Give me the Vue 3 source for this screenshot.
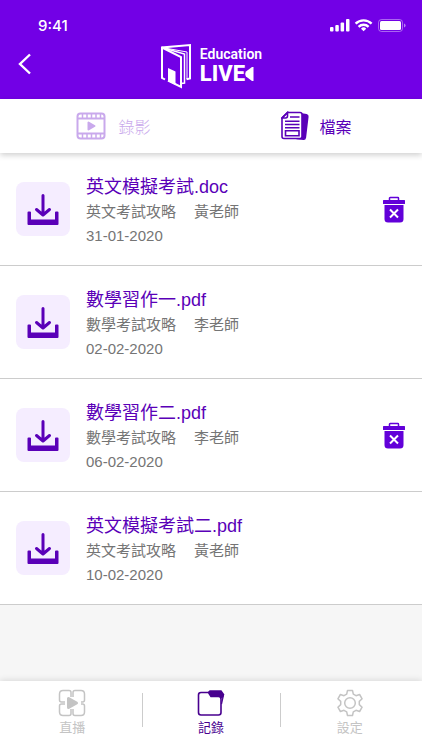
<template>
  <div class="files-view">
    <header class="app-header">
      <div class="status-bar">
        <span class="time">9:41</span>
        <svg class="status-icons" width="76" height="14" viewBox="0 0 76 14" fill="#fff">
          <rect x="0" y="8" width="3.500" height="4.500" rx="1" />
          <rect x="5.300" y="6" width="3.500" height="6.500" rx="1" />
          <rect x="10.600" y="3.500" width="3.500" height="9" rx="1" />
          <rect x="16" y="0" width="3.500" height="12.500" rx="1" />
          <g fill="none" stroke="#fff" stroke-width="2.400">
            <path d="M25.600 4.600a11.500 11.500 0 0 1 16 0" />
            <path d="M28.600 7.800a7.200 7.200 0 0 1 10 0" />
          </g>
          <path d="M31 9.700a3.600 3.600 0 0 1 5.200 0l-2.600 2.600z" />
          <rect x="48.500" y=".5" width="24" height="12" rx="3" fill="none" stroke="#fff" opacity=".4" />
          <rect x="50" y="2" width="21" height="9" rx="1.500" />
          <path d="M74 4.500v4q1.600-.6 1.600-2t-1.600-2z" opacity=".5" />
        </svg>
      </div>
      <div class="title-bar">
        <button class="back-btn" type="button" aria-label="返回">
          <svg width="14" height="22" viewBox="0 0 14 22" fill="none" stroke="#fff" stroke-width="2.400">
            <path d="M12 1.500 2 11l10 9.500" />
          </svg>
        </button>
        <div class="logo">
          <svg width="32" height="46" viewBox="0 0 32 46" fill="none" stroke="#fff" stroke-width="2">
            <path d="M5 36.500 2 34.800V4.500L30 2V35.500L26.500 36.300" />
            <path d="M2 4.500 21 14V44L8 37.500" />
            <path d="M2 4.500 24.500 11V40L21 40.500" stroke-width="1.500" />
            <path d="M2 4.500 27 9V36" stroke-width="1" />
            <path d="M8 25l7.500 3.500V42L8 38z" fill="#fff" stroke="none" />
          </svg>
          <div class="logo-text">
            <span class="logo-top">Education</span>
            <span class="logo-bottom">
              LIVE
              <svg width="9" height="14" viewBox="0 0 9 14" fill="#fff">
                <path d="M8.500 0v14H7L1 9.500Q-.5 7 1 4.500L7 0z" />
              </svg>
            </span>
          </div>
        </div>
      </div>
    </header>

    <div class="tabs">
      <button
        type="button"
        class="tab"
        :class="{ active: activeTab === 'video' }"
        @click="activeTab = 'video'"
      >
        <svg width="30" height="28" viewBox="0 0 30 28" fill="none" stroke="currentColor" stroke-width="2">
          <rect x="1.500" y="1.500" width="27" height="25" rx="3" />
          <path d="M2 6.500h26M2 21.500h26" />
          <path d="M6.500 2v4M11 2v4M15.500 2v4M20 2v4M24.500 2v4M6.500 22v4M11 22v4M15.500 22v4M20 22v4M24.500 22v4" stroke-width="1.500" />
          <path d="M12.500 10.500v7l6-3.500z" fill="currentColor" stroke-linejoin="round" />
        </svg>
        <span>錄影</span>
      </button>
      <button
        type="button"
        class="tab file-tab"
        :class="{ active: activeTab === 'file' }"
        @click="activeTab = 'file'"
      >
        <svg width="28" height="30" viewBox="0 0 28 30" fill="none" stroke="currentColor" stroke-width="1.600">
          <path d="M21 3l4.500.8q1.500.3 1.300 1.800l-2.500 21q-.3 1.900-1.800 1.700l-7-.8 4-1z" fill="currentColor" />
          <path d="M6.500 1.500H19q2 0 2 2V25.500q0 2-2 2H3q-2 0-2-2V7z" fill="#fff" />
          <path d="M6.500 1.500V5q0 2-2 2H1z" />
          <path d="M9 6h9.500M4 10.300h14.500M4 13.500h14.500M4 16.700h14.500" />
          <path d="M4.500 19.800h13.500v5h-13.500z" />
        </svg>
        <span>檔案</span>
      </button>
    </div>

    <ul class="file-list">
      <li v-for="file in files" :key="file.id" class="file-item">
        <button class="download-btn" type="button" :aria-label="'下載 ' + file.name">
          <svg width="32" height="32" viewBox="0 0 32 32" fill="none" stroke="#5a00b8">
            <path d="M16 2.500v19M9.500 16.500l6.500 5.500 6.500-5.500" stroke-width="3" stroke-linecap="round" stroke-linejoin="round" />
            <path d="M.5 19.500q0-1 1-1H3q1 0 1 1V26.500H28V19.500q0-1 1-1h1.500q1 0 1 1V31q0 1-1 1h-29q-1 0-1-1z" fill="#5a00b8" stroke="none" />
          </svg>
        </button>
        <div class="file-info">
          <h3>{{ file.name }}</h3>
          <p class="file-meta">
            <span>{{ file.course }}</span>
            <span>{{ file.teacher }}</span>
          </p>
          <p>{{ file.date }}</p>
        </div>
        <button
          v-if="file.downloaded"
          class="delete-btn"
          type="button"
          :aria-label="'刪除 ' + file.name"
        >
          <svg width="24" height="27" viewBox="0 0 24 27" fill="#6200d9">
            <path d="M7.500 5V2.200q0-.7.700-.7h7.600q.7 0 .7.700V5" fill="none" stroke="#6200d9" stroke-width="1.500" />
            <rect x="1" y="4" width="22" height="4" rx=".5" />
            <path d="M2.500 9h19v14q0 3.500-3.500 3.500H6q-3.500 0-3.500-3.500z" />
            <path d="M8 13.500l8 8M16 13.500l-8 8" stroke="#fff" stroke-width="2" />
          </svg>
        </button>
      </li>
    </ul>

    <nav class="bottom-nav">
      <a href="#" class="nav-item">
        <svg width="28" height="28" viewBox="0 0 28 28" fill="none" stroke="currentColor" stroke-width="1.500">
          <path d="M13 8V3.500Q13 1.500 11 1.500H5Q1.500 1.500 1.500 5v6q0 2 2 2H7" />
          <path d="M15 8V3.500q0-2 2-2h6q3.500 0 3.500 3.500v6q0 2-2 2H23" />
          <path d="M13 20v4.500q0 2-2 2H5Q1.500 26.500 1.500 23v-6q0-2 2-2H7" />
          <path d="M15 20v4.500q0 2 2 2h6q3.500 0 3.500-3.500v-6q0-2-2-2H23" />
          <path d="M10.500 9.500v9l8-4.500z" fill="currentColor" stroke-width="3" stroke-linejoin="round" />
        </svg>
        <span>直播</span>
      </a>
      <a href="#" class="nav-item active">
        <svg width="28" height="28" viewBox="0 0 28 28" fill="none" stroke="currentColor" stroke-width="1.600">
          <path d="M4 3.500h7.500l2.500 4h7.500q2.500 0 2.500 2.500V23.500q0 2.500-2.500 2.500H4q-2.500 0-2.500-2.500V6q0-2.500 2.500-2.500z" />
          <path d="M12 3l1-1h11l2.500 3.500-1.500 3q-1.500-2-3.500-2h-7.500z" fill="currentColor" />
          <path d="M26.500 6l-2 9" stroke-width="1.200" />
        </svg>
        <span>記錄</span>
      </a>
      <a href="#" class="nav-item">
        <svg width="28" height="28" viewBox="0 0 28 28" fill="none" stroke="currentColor" stroke-width="1.500" stroke-linejoin="round">
          <path d="M11.500 1.500h5l.8 3.700 2.700 1.500 3.600-1.200 2.500 4.300-2.800 2.600v3.200l2.800 2.600-2.500 4.300-3.600-1.200-2.700 1.500-.8 3.700h-5l-.8-3.700L8 21.300l-3.600 1.200-2.500-4.300 2.800-2.600v-3.200L1.900 9.800l2.500-4.300L8 6.700l2.700-1.500z" />
          <circle cx="14" cy="14" r="5.300" />
        </svg>
        <span>設定</span>
      </a>
    </nav>
  </div>
</template>

<script setup>
import { ref } from 'vue';

const activeTab = ref('file');

const files = ref([
  { id: 1, name: '英文模擬考試.doc', course: '英文考試攻略', teacher: '黃老師', date: '31-01-2020', downloaded: true },
  { id: 2, name: '數學習作一.pdf', course: '數學考試攻略', teacher: '李老師', date: '02-02-2020', downloaded: false },
  { id: 3, name: '數學習作二.pdf', course: '數學考試攻略', teacher: '李老師', date: '06-02-2020', downloaded: true },
  { id: 4, name: '英文模擬考試二.pdf', course: '英文考試攻略', teacher: '黃老師', date: '10-02-2020', downloaded: false }
]);
</script>

<style>
body {
  margin: 0;
  background: #f6f6f6;
}
</style>

<style scoped>
.files-view {
  display: flex;
  flex-direction: column;
  min-height: 100vh;
  background: #f6f6f6;
  font-family: "Liberation Sans", "Noto Sans CJK TC", sans-serif;
}

button {
  padding: 0;
  border: none;
  background: transparent;
  font: inherit;
  cursor: pointer;
}

svg {
  display: block;
  flex: none;
}

.app-header {
  background: #7200e6;
  color: #fff;
}

.status-bar {
  display: flex;
  justify-content: space-between;
  align-items: center;
  padding: 16px 16px 0 38px;
}

.time {
  font-family: Inter, sans-serif;
  font-size: 15px;
  line-height: 20px;
  font-weight: 500;
}

.title-bar {
  display: grid;
  grid-template-columns: 1fr auto 1fr;
  align-items: center;
  padding: 7px 16px 10px;
}

.back-btn {
  justify-self: start;
  padding: 0 0 4px 2px;
}

.logo {
  display: flex;
  align-items: center;
  gap: 8px;
}

.logo-text {
  display: flex;
  flex-direction: column;
  font-family: Roboto, sans-serif;
}

.logo-top {
  font-size: 14px;
  line-height: 16px;
  font-weight: 600;
}

.logo-bottom {
  display: flex;
  align-items: center;
  font-size: 22px;
  line-height: 24px;
  font-weight: 800;
}

.tabs {
  position: relative;
  z-index: 1;
  display: flex;
  height: 54px;
  background: #fff;
  box-shadow: 0 2px 6px rgba(0, 0, 0, 0.2);
}

.tab {
  box-sizing: border-box;
  width: 50%;
  display: flex;
  justify-content: center;
  align-items: center;
  gap: 12px;
  padding-left: 16px;
  font-size: 16px;
  font-weight: 300;
  color: #c9a9ec;
}

.file-tab {
  gap: 10px;
  padding-left: 0;
}

.tab.active {
  font-weight: 400;
  color: #5a00b8;
}

.file-list {
  margin: 0;
  padding: 0;
  list-style: none;
}

.file-item {
  display: flex;
  align-items: center;
  gap: 16px;
  height: 112px;
  padding: 0 16px;
  background: #fff;
  border-bottom: 1px solid #ccc;
}

.download-btn {
  display: flex;
  justify-content: center;
  align-items: center;
  flex: none;
  width: 54px;
  height: 54px;
  border-radius: 8px;
  background: #f5edff;
}

.file-info {
  flex: 1;
  min-width: 0;
  padding-top: 4px;
}

.file-info h3 {
  margin: 0;
  font-size: 18px;
  line-height: 26px;
  font-weight: 400;
  color: #5a00b8;
}

.file-info p {
  margin: 0;
  font-size: 15px;
  line-height: 24px;
  color: #757575;
}

.file-info .file-meta {
  display: flex;
  gap: 18px;
}

.bottom-nav {
  display: flex;
  margin-top: auto;
  height: 61px;
  padding: 8px 3px 0;
  background: #fff;
  box-shadow: 0 -1px 6px rgba(0, 0, 0, 0.12);
}

.nav-item {
  position: relative;
  flex: 1;
  display: flex;
  flex-direction: column;
  align-items: center;
  gap: 1px;
  font-size: 13px;
  line-height: 20px;
  color: #c4c4c4;
  text-decoration: none;
}

.nav-item + .nav-item::before {
  content: "";
  position: absolute;
  top: 4px;
  left: 0;
  width: 1px;
  height: 34px;
  background: #ccc;
}

.nav-item.active {
  color: #48008f;
}
</style>
